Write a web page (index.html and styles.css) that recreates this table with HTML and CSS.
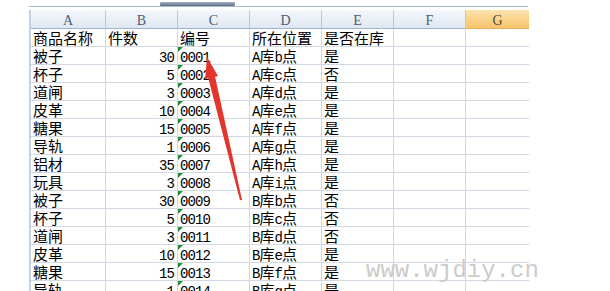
FILE: index.html
```html
<!DOCTYPE html>
<html lang="zh-CN">
<head>
<meta charset="utf-8">
<title>Sheet</title>
<link rel="stylesheet" href="styles.css">
</head>
<body>
<div class="wrap">
  <div class="topbar"><div class="thumb"></div></div>
  <div class="sheet">
    <div class="hd">A</div><div class="hd">B</div><div class="hd">C</div><div class="hd">D</div><div class="hd">E</div><div class="hd">F</div><div class="hd sel">G</div>

    <div class="c">商品名称</div><div class="c">件数</div><div class="c">编号</div><div class="c">所在位置</div><div class="c">是否在库</div><div class="c"></div><div class="c g"></div>

    <div class="c">被子</div><div class="c r"><span class="m">30</span></div><div class="c t"><span class="m">0001</span></div><div class="c"><span class="m">A</span>库<span class="m">b</span>点</div><div class="c">是</div><div class="c"></div><div class="c g"></div>
    <div class="c">杯子</div><div class="c r"><span class="m">5</span></div><div class="c t"><span class="m">0002</span></div><div class="c"><span class="m">A</span>库<span class="m">c</span>点</div><div class="c">否</div><div class="c"></div><div class="c g"></div>
    <div class="c">道闸</div><div class="c r"><span class="m">3</span></div><div class="c t"><span class="m">0003</span></div><div class="c"><span class="m">A</span>库<span class="m">d</span>点</div><div class="c">是</div><div class="c"></div><div class="c g"></div>
    <div class="c">皮革</div><div class="c r"><span class="m">10</span></div><div class="c t"><span class="m">0004</span></div><div class="c"><span class="m">A</span>库<span class="m">e</span>点</div><div class="c">是</div><div class="c"></div><div class="c g"></div>
    <div class="c">糖果</div><div class="c r"><span class="m">15</span></div><div class="c t"><span class="m">0005</span></div><div class="c"><span class="m">A</span>库<span class="m">f</span>点</div><div class="c">是</div><div class="c"></div><div class="c g"></div>
    <div class="c">导轨</div><div class="c r"><span class="m">1</span></div><div class="c t"><span class="m">0006</span></div><div class="c"><span class="m">A</span>库<span class="m">g</span>点</div><div class="c">是</div><div class="c"></div><div class="c g"></div>
    <div class="c">铝材</div><div class="c r"><span class="m">35</span></div><div class="c t"><span class="m">0007</span></div><div class="c"><span class="m">A</span>库<span class="m">h</span>点</div><div class="c">是</div><div class="c"></div><div class="c g"></div>
    <div class="c">玩具</div><div class="c r"><span class="m">3</span></div><div class="c t"><span class="m">0008</span></div><div class="c"><span class="m">A</span>库<span class="m">i</span>点</div><div class="c">是</div><div class="c"></div><div class="c g"></div>
    <div class="c">被子</div><div class="c r"><span class="m">30</span></div><div class="c t"><span class="m">0009</span></div><div class="c"><span class="m">B</span>库<span class="m">b</span>点</div><div class="c">否</div><div class="c"></div><div class="c g"></div>
    <div class="c">杯子</div><div class="c r"><span class="m">5</span></div><div class="c t"><span class="m">0010</span></div><div class="c"><span class="m">B</span>库<span class="m">c</span>点</div><div class="c">否</div><div class="c"></div><div class="c g"></div>
    <div class="c">道闸</div><div class="c r"><span class="m">3</span></div><div class="c t"><span class="m">0011</span></div><div class="c"><span class="m">B</span>库<span class="m">d</span>点</div><div class="c">否</div><div class="c"></div><div class="c g"></div>
    <div class="c">皮革</div><div class="c r"><span class="m">10</span></div><div class="c t"><span class="m">0012</span></div><div class="c"><span class="m">B</span>库<span class="m">e</span>点</div><div class="c">是</div><div class="c"></div><div class="c g"></div>
    <div class="c">糖果</div><div class="c r"><span class="m">15</span></div><div class="c t"><span class="m">0013</span></div><div class="c"><span class="m">B</span>库<span class="m">f</span>点</div><div class="c">是</div><div class="c"></div><div class="c g"></div>
    <div class="c">导轨</div><div class="c r"><span class="m">1</span></div><div class="c t"><span class="m">0014</span></div><div class="c"><span class="m">B</span>库<span class="m">g</span>点</div><div class="c">是</div><div class="c"></div><div class="c g"></div>
  </div>
</div>

<svg class="arrow" width="610" height="291" viewBox="0 0 610 291">
  <polygon points="207,57 218,76 215.1,76.7 242,200 240,200.3 208.3,78.3 205.2,79.2" fill="#e4352d"/>
</svg>

<div class="wm">www.wjdiy.cn</div>
</body>
</html>
```

FILE: styles.css
```css
html, body {
  margin: 0;
  padding: 0;
  background: #ffffff;
  width: 610px;
  height: 291px;
  overflow: hidden;
  position: relative;
}

.wrap {
  margin-left: 29px;
  width: 499px;
}

.topbar {
  height: 6px;
  border-bottom: 1px solid #a9b9cd;
  margin-bottom: 3px;
  display: flex;
}

.thumb {
  margin-left: 131px;
  margin-top: 2px;
  width: 75px;
  height: 4px;
  background: linear-gradient(#a3b0c1, #5f6f87);
  border-radius: 1px;
}

.sheet {
  display: grid;
  grid-template-columns: 75px repeat(5, 72px) 63px;
  border-left: 2px solid #c3d1e2;
}

.hd {
  box-sizing: border-box;
  height: 19px;
  padding-top: 2px;
  line-height: 18px;
  text-align: center;
  font-family: "Liberation Serif", serif;
  font-size: 14px;
  color: #4a5d78;
  background: linear-gradient(#f5f8fc, #dfe7f1);
  border-right: 1px solid #b9c9dc;
  border-bottom: 1px solid #9eb3cc;
}

.hd.sel {
  background: linear-gradient(#fce3b0, #f6c46b);
  border-right: none;
  border-bottom-color: #e9b25a;
  color: #5a4a30;
}

.c {
  box-sizing: border-box;
  height: 18px;
  line-height: 17px;
  padding: 0 2px;
  white-space: nowrap;
  font-family: "Noto Sans CJK SC", sans-serif;
  font-size: 15px;
  color: #000000;
  border-right: 1px solid #d2d8e3;
  border-bottom: 1px solid #d2d8e3;
  position: relative;
}

.c.g {
  border-right: none;
}

.c.r {
  text-align: right;
  padding-right: 3px;
}

.c.t::before {
  content: "";
  position: absolute;
  left: 0;
  top: 0;
  border-top: 5px solid #1f8a37;
  border-right: 5px solid transparent;
}

.m {
  font-family: "Liberation Mono", monospace;
  font-size: 14px;
  letter-spacing: -0.9px;
}

.arrow {
  position: absolute;
  left: 0;
  top: 0;
  pointer-events: none;
}

.wm {
  position: absolute;
  left: 366px;
  top: 259px;
  font-family: "Liberation Mono", monospace;
  font-size: 24px;
  line-height: 24px;
  color: #cbcbcb;
  white-space: nowrap;
}
```
